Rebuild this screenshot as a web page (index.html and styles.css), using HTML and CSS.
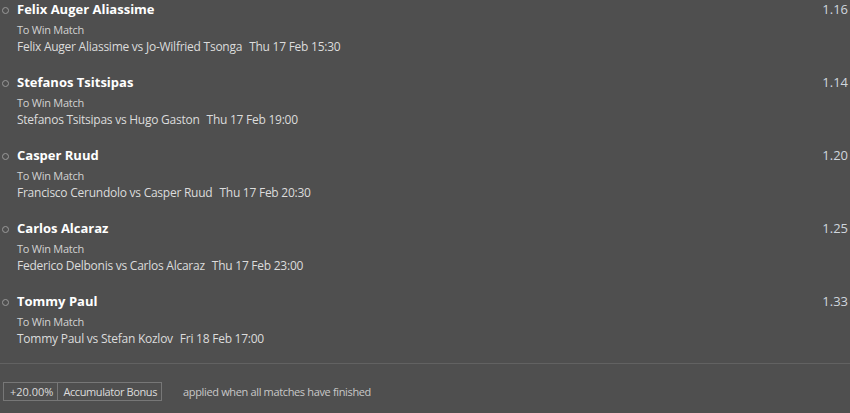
FILE: index.html
```html
<!DOCTYPE html>
<html lang="en">
<head>
    <meta charset="UTF-8">
    <title>Accumulator</title>
    <link rel="stylesheet" href="styles.css">
</head>
<body>
  <div class="slip">
    <div class="leg">
        <span class="dot"></span>
        <div class="info">
            <div class="pick">Felix Auger Aliassime</div>
            <div class="market">To Win Match</div>
            <div class="event">Felix Auger Aliassime vs Jo-Wilfried Tsonga<span class="time">Thu 17 Feb 15:30</span></div>
        </div>
        <div class="odds">1.16</div>
    </div>
    <div class="leg">
        <span class="dot"></span>
        <div class="info">
            <div class="pick">Stefanos Tsitsipas</div>
            <div class="market">To Win Match</div>
            <div class="event">Stefanos Tsitsipas vs Hugo Gaston<span class="time">Thu 17 Feb 19:00</span></div>
        </div>
        <div class="odds">1.14</div>
    </div>
    <div class="leg">
        <span class="dot"></span>
        <div class="info">
            <div class="pick">Casper Ruud</div>
            <div class="market">To Win Match</div>
            <div class="event">Francisco Cerundolo vs Casper Ruud<span class="time">Thu 17 Feb 20:30</span></div>
        </div>
        <div class="odds">1.20</div>
    </div>
    <div class="leg">
        <span class="dot"></span>
        <div class="info">
            <div class="pick">Carlos Alcaraz</div>
            <div class="market">To Win Match</div>
            <div class="event">Federico Delbonis vs Carlos Alcaraz<span class="time">Thu 17 Feb 23:00</span></div>
        </div>
        <div class="odds">1.25</div>
    </div>
    <div class="leg">
        <span class="dot"></span>
        <div class="info">
            <div class="pick">Tommy Paul</div>
            <div class="market">To Win Match</div>
            <div class="event">Tommy Paul vs Stefan Kozlov<span class="time">Fri 18 Feb 17:00</span></div>
        </div>
        <div class="odds">1.33</div>
    </div>

    <div class="bonus">
        <div class="tag">
            <span class="pct">+20.00%</span>
            <span class="label">Accumulator Bonus</span>
        </div>
        <span class="note">applied when all matches have finished</span>
    </div>
  </div>
</body>
</html>
```

FILE: styles.css
```css
body {
    margin: 0;
    background-color: #4f4f4f;
    font-family: "Open Sans", "Noto Sans", sans-serif;
    color: #e6e6e6;
}
.slip {
    width: 850px;
}
.leg {
    display: flex;
    align-items: flex-start;
    height: 73px;
}
.dot {
    width: 5px;
    height: 5px;
    border: 1px solid #9a9a9a;
    border-radius: 50%;
    margin: 7px 0 0 2px;
    flex-shrink: 0;
}
.info {
    flex: 1;
    margin-left: 8px;
}
.pick {
    font-size: 13px;
    font-weight: bold;
    color: #ffffff;
    line-height: 18px;
}
.market {
    font-size: 11px;
    letter-spacing: -0.25px;
    color: #d2d2d2;
    line-height: 16px;
    margin-top: 4px;
}
.event {
    font-size: 12px;
    letter-spacing: -0.25px;
    color: #dcdcdc;
    line-height: 18px;
}
.time {
    margin-left: 7px;
}
.odds {
    font-size: 13px;
    color: #cfd6de;
    line-height: 18px;
    margin-right: 2px;
}
.bonus {
    border-top: 1px solid #626262;
    margin-top: -2px;
    padding: 18px 3px 0;
    display: flex;
    align-items: center;
}
.tag {
    display: flex;
    border: 1px solid #777777;
    font-size: 11px;
    line-height: 17px;
    color: #dcdcdc;
}
.pct {
    padding: 0 4px 0 6px;
    border-right: 1px solid #777777;
}
.label {
    letter-spacing: -0.4px;
    padding: 0 4px 0 5px;
}
.note {
    font-size: 11px;
    letter-spacing: -0.35px;
    color: #c8c8c8;
    margin-left: 21px;
}
```
